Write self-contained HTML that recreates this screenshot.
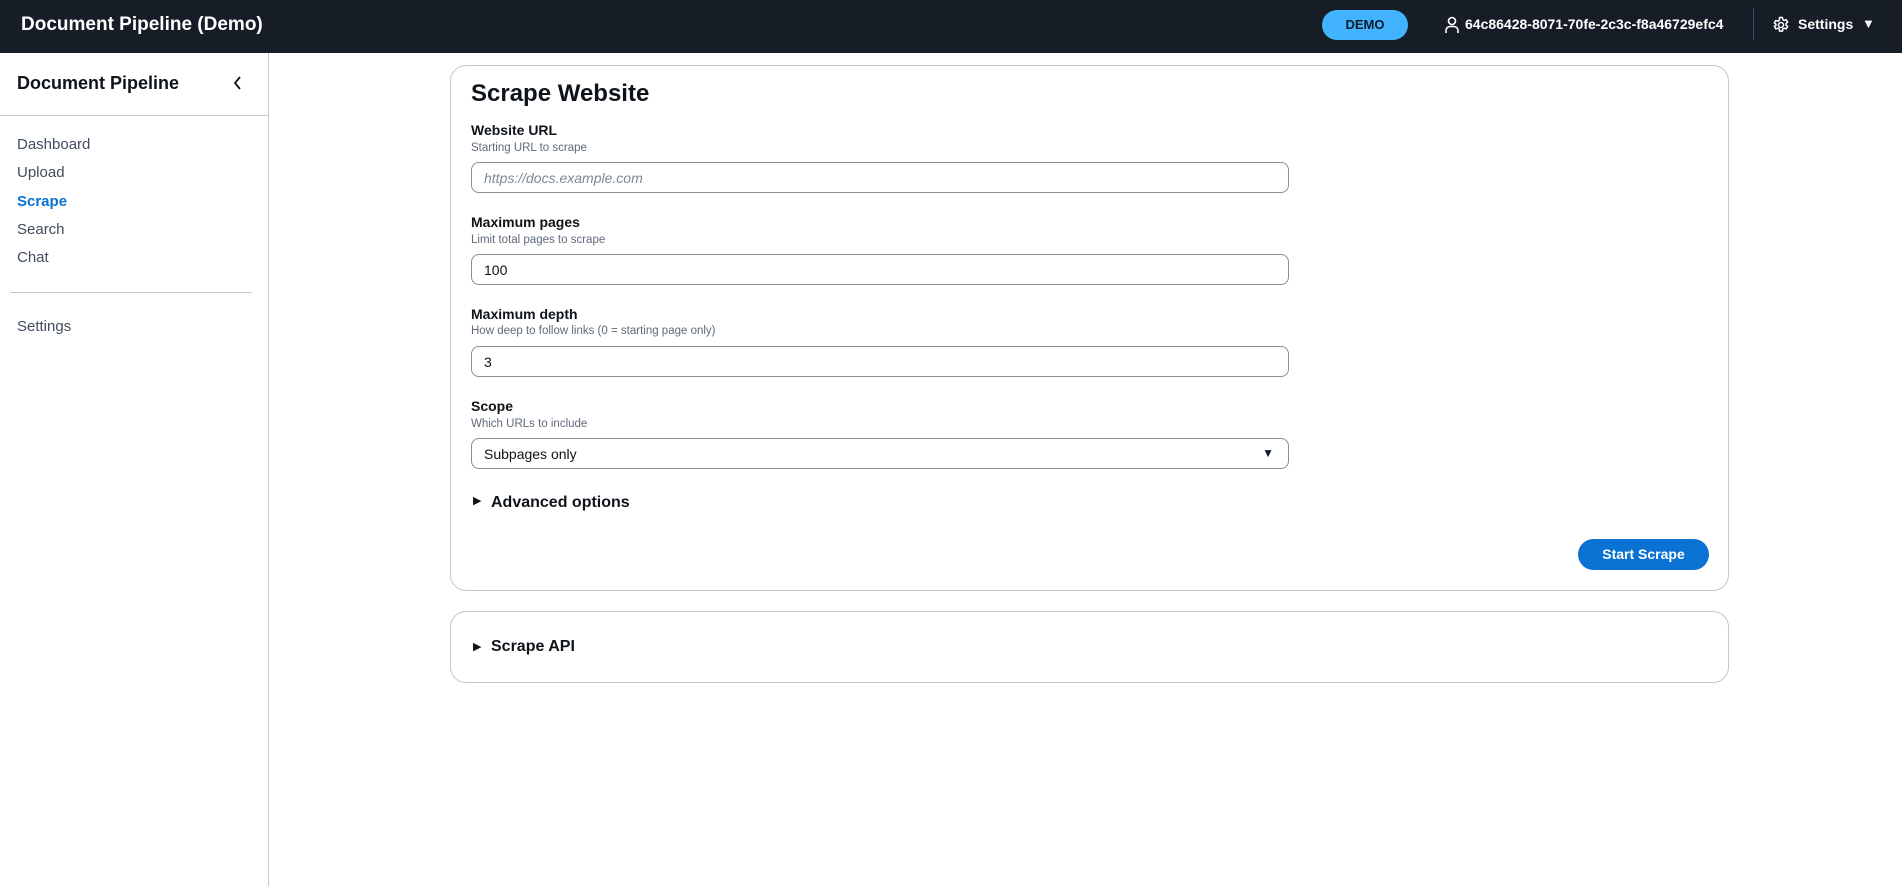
<!DOCTYPE html>
<html><head><meta charset="utf-8"><style>
*{box-sizing:border-box;margin:0;padding:0}
body{width:1902px;height:886px;overflow:hidden;background:#fff;font-family:"Liberation Sans",sans-serif;color:#0f141a;position:relative}
.hdr{position:absolute;left:0;top:0;width:1902px;height:53px;background:#161d26;color:#fff}
.abs{position:absolute;white-space:nowrap}
.side{position:absolute;left:0;top:53px;width:269px;height:833px;border-right:1px solid #c6c6cd}
.card{position:absolute;left:450px;width:1279px;border:1px solid #c6c6cd;border-radius:16px}
.lbl{position:absolute;left:20px;font-size:14px;font-weight:bold;white-space:nowrap}
.desc{position:absolute;left:20px;font-size:11.5px;color:#5f6b7a;white-space:nowrap}
.inp{position:absolute;left:20px;width:818px;height:31px;border:1px solid #8c8c94;border-radius:8px;font-size:14px;padding:7px 12px;white-space:nowrap}
.nav{position:absolute;left:17px;font-size:15px;color:#414d5c}
</style></head><body>
<div class="hdr">
  <div class="abs" style="left:21px;top:14px;font-size:19px;font-weight:bold">Document Pipeline (Demo)</div>
  <div class="abs" style="left:1322px;top:10px;width:86px;height:30px;border-radius:15px;background:#42b4ff;color:#0f1b2a;font-size:13px;font-weight:bold;text-align:center;line-height:30px">DEMO</div>
  <svg class="abs" style="left:1444px;top:15px" width="16" height="20" viewBox="0 0 16 20" fill="none" stroke="#fff" stroke-width="1.6"><circle cx="8" cy="6" r="3.5"/><path d="M2 18v-2.5a4 4 0 0 1 4-4h4a4 4 0 0 1 4 4V18"/></svg>
  <div class="abs" style="left:1465px;top:16px;font-size:14px;font-weight:bold">64c86428-8071-70fe-2c3c-f8a46729efc4</div>
  <div class="abs" style="left:1753px;top:8px;width:1px;height:32px;background:#414d5c"></div>
  <svg class="abs" style="left:1772px;top:16px" width="18" height="18" viewBox="0 0 18 18" fill="none" stroke="#fff" stroke-width="1.5"><circle cx="9" cy="9" r="2.5"/><path d="M7.6 1.5h2.8l.4 2.1 1.4.8 2-.7 1.4 2.4-1.6 1.4v1.6l1.6 1.4-1.4 2.4-2-.7-1.4.8-.4 2.1H7.6l-.4-2.1-1.4-.8-2 .7-1.4-2.4 1.6-1.4V8.3L2.4 6.9l1.4-2.4 2 .7 1.4-.8z"/></svg>
  <div class="abs" style="left:1798px;top:16px;font-size:14px;font-weight:bold">Settings</div>
  <div class="abs" style="left:1862px;top:16px;font-size:13px">▼</div>
</div>
<div class="side">
  <div class="abs" style="left:17px;top:20px;font-size:18px;font-weight:bold">Document Pipeline</div>
  <svg class="abs" style="left:232px;top:22px" width="12" height="16" viewBox="0 0 12 16" fill="none" stroke="#0f141a" stroke-width="1.8"><path d="M8 2L3 8l5 6"/></svg>
  <div class="abs" style="left:0;top:62px;width:269px;height:1px;background:#c6c6cd"></div>
  <div class="nav" style="top:83px">Dashboard</div>
  <div class="nav" style="top:111px">Upload</div>
  <div class="nav" style="top:140px;color:#0972d3;font-weight:bold">Scrape</div>
  <div class="nav" style="top:168px">Search</div>
  <div class="nav" style="top:196px">Chat</div>
  <div class="abs" style="left:10px;top:239px;width:242px;height:1px;background:#c6c6cd"></div>
  <div class="nav" style="top:265px">Settings</div>
</div>
<div class="card" style="top:65px;height:526px">
  <div class="abs" style="left:20px;top:14px;font-size:24px;font-weight:bold">Scrape Website</div>
  <div class="lbl" style="top:56px">Website URL</div>
  <div class="desc" style="top:76px">Starting URL to scrape</div>
  <div class="inp" style="top:96px;color:#7d8998;font-style:italic">https://docs.example.com</div>
  <div class="lbl" style="top:148px">Maximum pages</div>
  <div class="desc" style="top:168px">Limit total pages to scrape</div>
  <div class="inp" style="top:188px">100</div>
  <div class="lbl" style="top:240px">Maximum depth</div>
  <div class="desc" style="top:259px">How deep to follow links (0 = starting page only)</div>
  <div class="inp" style="top:280px">3</div>
  <div class="lbl" style="top:332px">Scope</div>
  <div class="desc" style="top:352px">Which URLs to include</div>
  <div class="inp" style="top:372px">Subpages only<span style="position:absolute;right:14px;top:7px;font-size:12px;color:#0f1b2a">▼</span></div>
  <div class="abs" style="left:22px;top:428px;font-size:11px">▶</div>
  <div class="abs" style="left:40px;top:428px;font-size:16px;font-weight:bold">Advanced options</div>
  <div class="abs" style="left:1127px;top:473px;width:131px;height:31px;border-radius:16px;background:#0972d3;color:#fff;font-size:14px;font-weight:bold;text-align:center;line-height:31px">Start Scrape</div>
</div>
<div class="card" style="top:611px;height:72px">
  <div class="abs" style="left:22px;top:28px;font-size:11px">▶</div>
  <div class="abs" style="left:40px;top:26px;font-size:16px;font-weight:bold">Scrape API</div>
</div>
</body></html>
